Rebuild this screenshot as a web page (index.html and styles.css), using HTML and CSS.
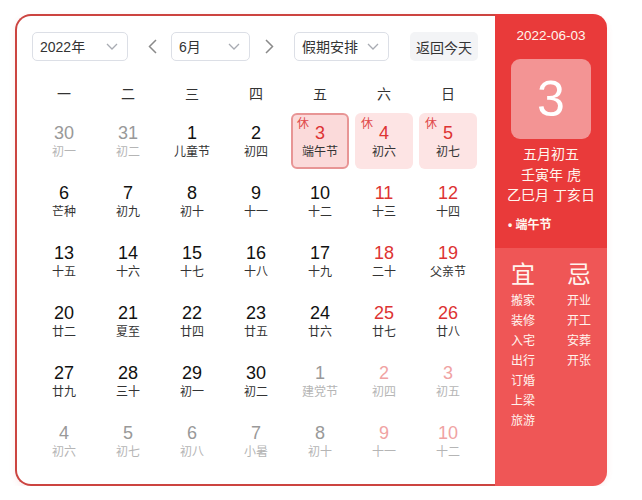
FILE: index.html
```html
<!DOCTYPE html>
<html lang="zh">
<head>
<meta charset="utf-8">
<title>万年历</title>
<link rel="stylesheet" href="styles.css">
</head>
<body>
<div class="cal">
  <div class="main">
    <div class="toolbar">
      <div class="select sel-year"><span>2022年</span><svg class="chev" width="12" height="7" viewBox="0 0 12 7"><polyline points="1,1 6,6 11,1" fill="none" stroke="#a8abb2" stroke-width="1.3"/></svg></div>
      <div class="arrow arrow-prev"><svg width="9" height="15" viewBox="0 0 9 15"><polyline points="8,1 1.5,7.5 8,14" fill="none" stroke="#8a8a8a" stroke-width="1.5"/></svg></div>
      <div class="select sel-month"><span>6月</span><svg class="chev" width="12" height="7" viewBox="0 0 12 7"><polyline points="1,1 6,6 11,1" fill="none" stroke="#a8abb2" stroke-width="1.3"/></svg></div>
      <div class="arrow arrow-next"><svg width="9" height="15" viewBox="0 0 9 15"><polyline points="1,1 7.5,7.5 1,14" fill="none" stroke="#8a8a8a" stroke-width="1.5"/></svg></div>
      <div class="select sel-holiday"><span>假期安排</span><svg class="chev" width="12" height="7" viewBox="0 0 12 7"><polyline points="1,1 6,6 11,1" fill="none" stroke="#a8abb2" stroke-width="1.3"/></svg></div>
      <div class="today-btn">返回今天</div>
    </div>
    <div class="weekdays">
      <div>一</div><div>二</div><div>三</div><div>四</div><div>五</div><div>六</div><div>日</div>
    </div>
    <div class="grid">
      <div class="cell other"><div class="num">30</div><div class="lunar">初一</div></div>
      <div class="cell other"><div class="num">31</div><div class="lunar">初二</div></div>
      <div class="cell"><div class="num">1</div><div class="lunar">儿童节</div></div>
      <div class="cell"><div class="num">2</div><div class="lunar">初四</div></div>
      <div class="cell rest selected"><span class="xiu">休</span><div class="num">3</div><div class="lunar">端午节</div></div>
      <div class="cell rest"><span class="xiu">休</span><div class="num">4</div><div class="lunar">初六</div></div>
      <div class="cell rest"><span class="xiu">休</span><div class="num">5</div><div class="lunar">初七</div></div>

      <div class="cell"><div class="num">6</div><div class="lunar">芒种</div></div>
      <div class="cell"><div class="num">7</div><div class="lunar">初九</div></div>
      <div class="cell"><div class="num">8</div><div class="lunar">初十</div></div>
      <div class="cell"><div class="num">9</div><div class="lunar">十一</div></div>
      <div class="cell"><div class="num">10</div><div class="lunar">十二</div></div>
      <div class="cell weekend"><div class="num">11</div><div class="lunar">十三</div></div>
      <div class="cell weekend"><div class="num">12</div><div class="lunar">十四</div></div>

      <div class="cell"><div class="num">13</div><div class="lunar">十五</div></div>
      <div class="cell"><div class="num">14</div><div class="lunar">十六</div></div>
      <div class="cell"><div class="num">15</div><div class="lunar">十七</div></div>
      <div class="cell"><div class="num">16</div><div class="lunar">十八</div></div>
      <div class="cell"><div class="num">17</div><div class="lunar">十九</div></div>
      <div class="cell weekend"><div class="num">18</div><div class="lunar">二十</div></div>
      <div class="cell weekend"><div class="num">19</div><div class="lunar">父亲节</div></div>

      <div class="cell"><div class="num">20</div><div class="lunar">廿二</div></div>
      <div class="cell"><div class="num">21</div><div class="lunar">夏至</div></div>
      <div class="cell"><div class="num">22</div><div class="lunar">廿四</div></div>
      <div class="cell"><div class="num">23</div><div class="lunar">廿五</div></div>
      <div class="cell"><div class="num">24</div><div class="lunar">廿六</div></div>
      <div class="cell weekend"><div class="num">25</div><div class="lunar">廿七</div></div>
      <div class="cell weekend"><div class="num">26</div><div class="lunar">廿八</div></div>

      <div class="cell"><div class="num">27</div><div class="lunar">廿九</div></div>
      <div class="cell"><div class="num">28</div><div class="lunar">三十</div></div>
      <div class="cell"><div class="num">29</div><div class="lunar">初一</div></div>
      <div class="cell"><div class="num">30</div><div class="lunar">初二</div></div>
      <div class="cell other"><div class="num">1</div><div class="lunar">建党节</div></div>
      <div class="cell other weekend"><div class="num">2</div><div class="lunar">初四</div></div>
      <div class="cell other weekend"><div class="num">3</div><div class="lunar">初五</div></div>

      <div class="cell other"><div class="num">4</div><div class="lunar">初六</div></div>
      <div class="cell other"><div class="num">5</div><div class="lunar">初七</div></div>
      <div class="cell other"><div class="num">6</div><div class="lunar">初八</div></div>
      <div class="cell other"><div class="num">7</div><div class="lunar">小暑</div></div>
      <div class="cell other"><div class="num">8</div><div class="lunar">初十</div></div>
      <div class="cell other weekend"><div class="num">9</div><div class="lunar">十一</div></div>
      <div class="cell other weekend"><div class="num">10</div><div class="lunar">十二</div></div>
    </div>
  </div>
  <div class="side">
    <div class="side-top">
      <div class="side-date">2022-06-03</div>
      <div class="side-day">3</div>
      <div class="side-lunar">五月初五</div>
      <div class="side-lunar">壬寅年 虎</div>
      <div class="side-lunar">乙巳月 丁亥日</div>
      <div class="side-fest">• 端午节</div>
    </div>
    <div class="side-bottom">
      <div class="yj-col">
        <div class="yj-title">宜</div>
        <div class="yj-item">搬家</div>
        <div class="yj-item">装修</div>
        <div class="yj-item">入宅</div>
        <div class="yj-item">出行</div>
        <div class="yj-item">订婚</div>
        <div class="yj-item">上梁</div>
        <div class="yj-item">旅游</div>
      </div>
      <div class="yj-col">
        <div class="yj-title">忌</div>
        <div class="yj-item">开业</div>
        <div class="yj-item">开工</div>
        <div class="yj-item">安葬</div>
        <div class="yj-item">开张</div>
      </div>
    </div>
  </div>
</div>
</body>
</html>
```
FILE: styles.css
```css
* { box-sizing: border-box; }
html, body { margin: 0; background: #fff; }
body {
  padding: 14px 0 0 15px;
  font-family: "Liberation Sans", "Noto Sans CJK SC", sans-serif;
  color: #333;
}
.cal {
  display: flex;
  width: 592px;
  height: 472px;
  border-radius: 16px;
  box-shadow: 0 2px 6px rgba(220, 80, 80, 0.12);
}
.main {
  width: 480px;
  height: 472px;
  border: 2px solid #cc4440;
  border-right: none;
  border-radius: 16px 0 0 16px;
  padding: 16px 0 0 15px;
}
.toolbar {
  display: flex;
  align-items: center;
  height: 29px;
}
.select {
  height: 29px;
  border: 1px solid #dcdfe6;
  border-radius: 5px;
  display: flex;
  align-items: center;
  justify-content: space-between;
  padding: 0 9px 0 7px;
  font-size: 14px;
  color: #333;
}
.select span { line-height: 20px; }
.sel-year { width: 96px; margin-right: 14px; }
.sel-month { width: 79px; margin-right: 9px; }
.sel-holiday { width: 95px; margin-right: 21px; }
.arrow {
  width: 20px;
  height: 29px;
  display: flex;
  align-items: center;
  justify-content: center;
  margin-right: 9px;
}
.arrow-next { margin-right: 15px; }
.today-btn {
  width: 68px;
  height: 29px;
  border-radius: 5px;
  background: #f3f4f6;
  font-size: 14px;
  color: #333;
  display: flex;
  align-items: center;
  justify-content: center;
}
.weekdays {
  display: grid;
  grid-template-columns: repeat(7, 64px);
  margin-top: 19px;
  height: 28px;
  line-height: 28px;
  text-align: center;
  font-size: 14px;
  color: #333;
}
.grid {
  display: grid;
  grid-template-columns: repeat(7, 64px);
  grid-auto-rows: 60px;
  margin-top: 3px;
}
.cell {
  position: relative;
  margin: 2px 3px;
  border-radius: 6px;
  text-align: center;
  padding-top: 9px;
  border: 2px solid transparent;
}
.cell .num {
  font-size: 18px;
  line-height: 20px;
  color: #111;
  margin-top: -1px;
}
.cell .lunar {
  font-size: 12px;
  line-height: 16px;
  margin-top: 1px;
  color: #333;
}
.cell.weekend .num { color: #dd3333; }
.cell.other .num { color: #999; }
.cell.other .lunar { color: #b5b5b5; }
.cell.other.weekend .num { color: #f0a3a3; }
.cell.rest { background: #fde4e4; }
.cell.rest .num { color: #dd3333; }
.cell.selected {
  background: #fbdada;
  border-color: #e89595;
}
.xiu {
  position: absolute;
  left: 4px;
  top: 3px;
  font-size: 12px;
  line-height: 12px;
  color: #e04848;
}
.side {
  width: 112px;
  height: 472px;
  border-radius: 0 14px 14px 0;
  overflow: hidden;
  display: flex;
  flex-direction: column;
}
.side-top {
  background: #e93a3a;
  height: 234px;
  padding-top: 13px;
  display: flex;
  flex-direction: column;
  align-items: center;
  color: #fff6ee;
}
.side-date {
  font-size: 13.5px;
  line-height: 18px;
}
.side-day {
  width: 80px;
  height: 80px;
  margin-top: 14px;
  margin-bottom: 5px;
  border-radius: 9px;
  background: #f39494;
  color: #fff;
  font-size: 50px;
  line-height: 80px;
  text-align: center;
}
.side-lunar {
  font-size: 14px;
  line-height: 20.5px;
}
.side-fest {
  align-self: flex-start;
  margin-left: 13px;
  margin-top: 11px;
  font-size: 12px;
  font-weight: bold;
  line-height: 16px;
}
.side-bottom {
  flex: 1;
  background: #ef5656;
  display: flex;
  justify-content: space-between;
  padding: 13px 16px 0 16px;
  color: #fff4ee;
}
.yj-col {
  width: 24px;
  display: flex;
  flex-direction: column;
  align-items: center;
}
.yj-title {
  font-size: 24px;
  line-height: 28px;
  font-weight: normal;
  margin-bottom: 2px;
}
.yj-item {
  font-size: 12px;
  line-height: 20px;
}
```
